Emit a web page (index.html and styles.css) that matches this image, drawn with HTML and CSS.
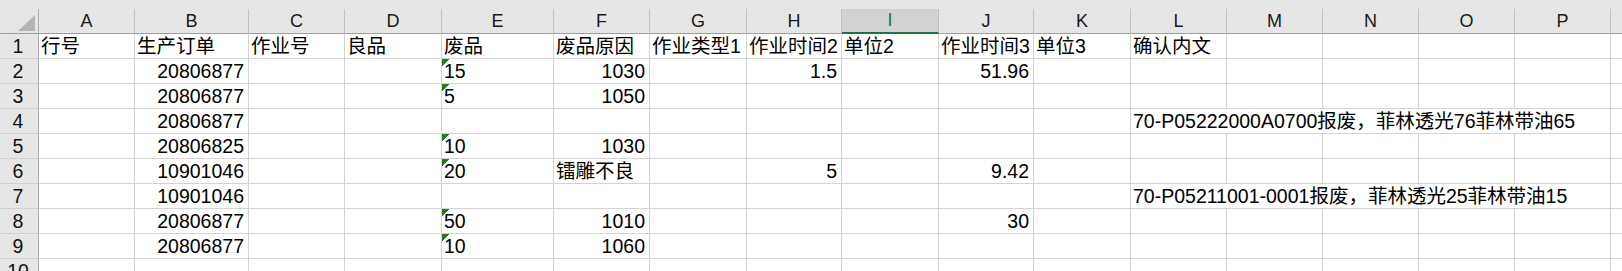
FILE: index.html
```html
<!DOCTYPE html>
<html lang="zh-CN">
<head>
    <meta charset="UTF-8">
    <meta name="viewport" content="width=device-width, initial-scale=1.0">
    <title>Sheet1</title>
    <link rel="stylesheet" href="styles.css">
</head>
<body>
    <div class="ribbon-edge"></div>
    <div class="sheet" id="sheet"></div>

    <script>
        // Column letters along the top (Q is only partly visible)
        const COLS = ['A','B','C','D','E','F','G','H','I','J','K','L','M','N','O','P','Q'];
        const SELECTED_COL = 'I';
        const LAST_SPILL_COL = 'P';

        // Sheet contents: numbers are right aligned, strings left aligned
        const rows = [
            { A: '行号', B: '生产订单', C: '作业号', D: '良品', E: '废品', F: '废品原因', G: '作业类型1', H: '作业时间2', I: '单位2', J: '作业时间3', K: '单位3', L: '确认内文' },
            { B: 20806877, E: '15', F: 1030, H: 1.5, J: 51.96 },
            { B: 20806877, E: '5', F: 1050 },
            { B: 20806877, L: '70-P05222000A0700报废，菲林透光76菲林带油65' },
            { B: 20806825, E: '10', F: 1030 },
            { B: 10901046, E: '20', F: '镭雕不良', H: 5, J: 9.42 },
            { B: 10901046, L: '70-P05211001-0001报废，菲林透光25菲林带油15' },
            { B: 20806877, E: '50', F: 1010, J: 30 },
            { B: 20806877, E: '10', F: 1060 },
            {}
        ];

        function el(cls, text) {
            const d = document.createElement('div');
            d.className = cls;
            if (text !== undefined) d.textContent = text;
            return d;
        }

        function buildSheet() {
            const sheet = document.getElementById('sheet');

            // header row
            const corner = el('col-head corner');
            corner.innerHTML = '<svg width="17" height="16" viewBox="0 0 17 16"><polygon points="17,0 17,16 0,16" fill="#b4b4b4"/></svg>';
            sheet.appendChild(corner);
            COLS.forEach(c => {
                sheet.appendChild(el('col-head' + (c === SELECTED_COL ? ' selected' : ''), c));
            });

            // data rows
            rows.forEach((row, r) => {
                sheet.appendChild(el('row-head', r + 1));
                for (let i = 0; i < COLS.length; i++) {
                    const v = row[COLS[i]];
                    if (v === undefined) {
                        sheet.appendChild(el('cell'));
                        continue;
                    }
                    let cls = 'cell';
                    if (typeof v === 'number') cls += ' num';
                    // numbers typed in as text get the green marker
                    else if (/^\d+(\.\d+)?$/.test(v)) cls += ' flag';

                    const cell = el(cls, v);
                    // long text runs over the empty cells to its right
                    if (typeof v === 'string' && v.length > 12) {
                        let span = 1;
                        const stop = COLS.indexOf(LAST_SPILL_COL);
                        while (i + span <= stop && row[COLS[i + span]] === undefined) span++;
                        cell.style.gridColumn = 'span ' + span;
                        i += span - 1;
                    }
                    sheet.appendChild(cell);
                }
            });
        }

        buildSheet();
    </script>
</body>
</html>
```

FILE: styles.css
```css
* {
    box-sizing: border-box;
}
body {
    margin: 0;
    background: #fff;
    overflow: hidden;
    font-family: "Liberation Sans", "Noto Sans CJK SC", sans-serif;
    color: #000;
}
.ribbon-edge {
    height: 9px;
    background: #e6e6e6;
}
.sheet {
    display: grid;
    grid-template-columns: 39px 96px 114px 96px 97px 112px 96px 97px 95px 97px 95px 97px 96px 96px 96px 96px 96px 96px;
    grid-auto-rows: 25px;
    width: max-content;
}
.col-head {
    background: #e6e6e6;
    border-right: 1px solid #c0c0c0;
    border-bottom: 1px solid #9e9e9e;
    display: flex;
    align-items: center;
    justify-content: center;
    font-size: 18px;
    color: #1a1a1a;
}
.col-head.selected {
    background: #d2d2d2;
    color: #217346;
    border-bottom: 2px solid #217346;
}
.col-head.corner {
    justify-content: flex-end;
    align-items: flex-end;
    padding: 0 3px 2px 0;
    border-right-color: #ababab;
}
.corner svg {
    display: block;
}
.row-head {
    background: #e6e6e6;
    border-right: 1px solid #ababab;
    border-bottom: 1px solid #d0d0d0;
    display: flex;
    align-items: center;
    justify-content: center;
    font-size: 19.5px;
    padding-right: 2px;
    color: #111;
}
.cell {
    border-right: 1px solid #d4d4d4;
    border-bottom: 1px solid #d4d4d4;
    display: flex;
    align-items: flex-end;
    padding: 0 3px 0 2px;
    font-size: 19.5px;
    line-height: 24px;
    white-space: nowrap;
    min-width: 0;
}
.cell.num {
    justify-content: flex-end;
    padding-right: 4px;
}
.cell.flag {
    background: linear-gradient(135deg, #1b7d1b 50%, transparent 50%) 0 0 / 8px 8px no-repeat;
}
```
